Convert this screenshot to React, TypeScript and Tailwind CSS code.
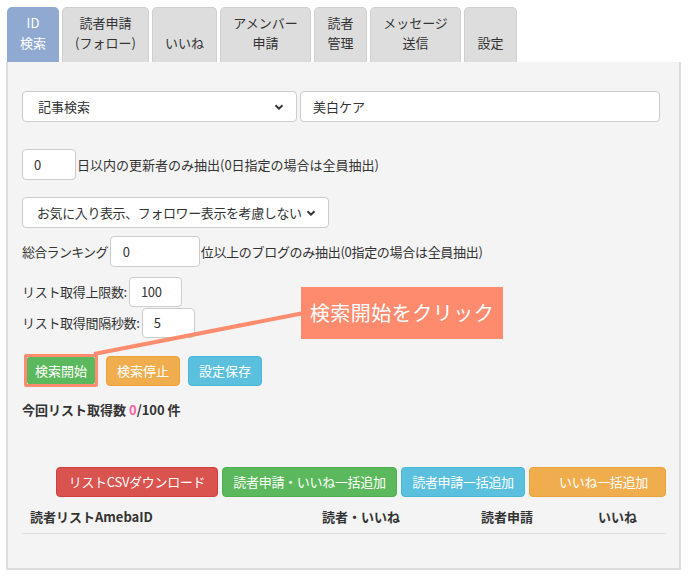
import React from 'react';

const tabs = [
  { label: ['ID', '検索'], w: 'w-[52px]', active: true },
  { label: ['読者申請', '(フォロー)'], w: 'w-[87px]' },
  { label: ['いいね'], w: 'w-[65px]' },
  { label: ['アメンバー', '申請'], w: 'w-[91px]' },
  { label: ['読者', '管理'], w: 'w-[53px]' },
  { label: ['メッセージ', '送信'], w: 'w-[91px]' },
  { label: ['設定'], w: 'w-[53px]' },
];

function Chevron() {
  return (
    <svg width="10" height="10" viewBox="0 0 10 10" className="shrink-0">
      <path d="M1.5 3.2 L5 6.7 L8.5 3.2" fill="none" stroke="#333" strokeWidth="2" />
    </svg>
  );
}

function Box({ className, children }: { className: string; children?: React.ReactNode }) {
  return (
    <div className={`bg-white border border-[#ccc] rounded-[4px] flex items-center whitespace-nowrap ${className}`}>
      {children}
    </div>
  );
}

export default function App() {
  return (
    <div className="w-[695px] h-[579px] bg-white text-[13px] leading-[18px] text-[#333] font-['Noto_Sans_CJK_JP','Noto_Sans',sans-serif] pt-[7px] pl-[6px]">
      {/* Tabs */}
      <div className="flex gap-[3px] pl-px h-[55px]">
        {tabs.map((t, i) => (
          <div
            key={i}
            className={`${t.w} rounded-t-[5px] flex flex-col items-center justify-end pb-[9px] leading-5 text-center ${
              t.active ? 'bg-[#8fa9d1] text-white' : 'bg-[#dddddd] border border-b-0 border-[#cfcfcf]'
            }`}
          >
            {t.label.map((l) => (
              <span key={l}>{l}</span>
            ))}
          </div>
        ))}
      </div>

      {/* Panel */}
      <div className="relative w-[675px] h-[508px] bg-[#f4f4f4] border-2 border-t-0 border-[#dddddd] pl-[14px] pr-[8px] pt-[29px]">
        <div className="flex gap-[3px]">
          <Box className="w-[275px] h-[31px] pl-[15px] pr-[12px] justify-between">
            <span>記事検索</span>
            <Chevron />
          </Box>
          <Box className="w-[360px] h-[31px] pl-[12px]">
            <span>美白ケア</span>
          </Box>
        </div>

        <div className="flex items-center mt-[27px]">
          <Box className="w-[54px] h-[31px] pl-[11px]">0</Box>
          <span className="ml-px">日以内の更新者のみ抽出(0日指定の場合は全員抽出)</span>
        </div>

        <Box className="mt-[17px] w-[307px] h-[31px] pl-[14px] pr-[12px] justify-between">
          <span className="tracking-[-0.4px]">お気に入り表示、フォロワー表示を考慮しない</span>
          <Chevron />
        </Box>

        <div className="flex items-center mt-[8px] tracking-[-0.3px]">
          <span className="tracking-[-0.7px]">総合ランキング</span>
          <Box className="w-[90px] h-[31px] pl-[12px] ml-[2px]">0</Box>
          <span className="ml-px">位以上のブログのみ抽出(0指定の場合は全員抽出)</span>
        </div>

        <div className="flex items-center mt-[10px] tracking-[-0.3px]">
          <span>リスト取得上限数:</span>
          <Box className="w-[53px] h-[30px] pl-[11px] ml-[2px]">100</Box>
        </div>
        <div className="flex items-center mt-px tracking-[-0.3px]">
          <span>リスト取得間隔秒数:</span>
          <Box className="w-[53px] h-[30px] pl-[11px] ml-[2px]">5</Box>
        </div>

        <div className="flex items-center gap-[8px] mt-[16px] ml-[2px]">
          <div className="border-[3px] border-[#ff8c6e] rounded-[2px]">
            <div className="bg-[#5cb85c] text-white w-[68px] h-[27px] flex items-center justify-center rounded-[2px]">
              検索開始
            </div>
          </div>
          <div className="bg-[#f0ad4e] border border-[#eea236] text-white w-[74px] h-[30px] flex items-center justify-center rounded-[4px]">
            検索停止
          </div>
          <div className="bg-[#5bc0de] border border-[#46b8da] text-white w-[74px] h-[30px] flex items-center justify-center rounded-[4px]">
            設定保存
          </div>
        </div>

        <div className="mt-[14px] font-bold">
          今回リスト取得数 <span className="text-[#ff5fa2]">0</span>/100 件
        </div>

        <div className="flex gap-[4px] mt-[48px] ml-[34px] whitespace-nowrap tracking-[-0.3px]">
          <div className="shrink-0 bg-[#d9534f] border border-[#d43f3a] text-white w-[162px] h-[30px] flex items-center justify-center rounded-[4px]">
            リストCSVダウンロード
          </div>
          <div className="shrink-0 bg-[#5cb85c] border border-[#4cae4c] text-white w-[175px] h-[30px] flex items-center justify-center rounded-[4px]">
            読者申請・いいね一括追加
          </div>
          <div className="shrink-0 bg-[#5bc0de] border border-[#46b8da] text-white w-[124px] h-[30px] flex items-center justify-center rounded-[4px]">
            読者申請一括追加
          </div>
          <div className="shrink-0 bg-[#f0ad4e] border border-[#eea236] text-white w-[137px] h-[30px] flex items-center justify-center rounded-[4px] pl-[12px]">
            いいね一括追加
          </div>
        </div>

        <div className="flex items-center h-[37px] pt-[4px] border-b border-[#dddddd] font-bold w-[644px]">
          <span className="w-[300px] pl-[8px]">読者リストAmebaID</span>
          <span className="w-[159px]">読者・いいね</span>
          <span className="w-[117px]">読者申請</span>
          <span>いいね</span>
        </div>

        {/* Callout */}
        <svg className="absolute left-0 top-0 pointer-events-none" width="675" height="508">
          <line x1="86" y1="292" x2="296" y2="251" stroke="#ff8c6e" strokeWidth="4" />
        </svg>
        <div className="absolute left-[293px] top-[225px] w-[202px] h-[52px] bg-[#ff8b6e] text-white text-[20px] flex items-center justify-center tracking-[0.5px]">
          検索開始をクリック
        </div>
      </div>
    </div>
  );
}
